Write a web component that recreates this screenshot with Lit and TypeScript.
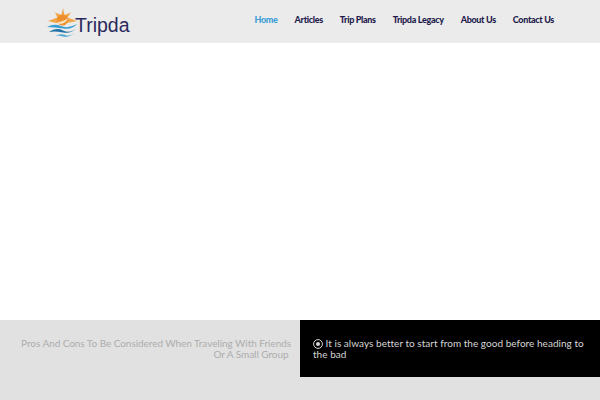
import { LitElement, html, css } from "lit";
import { customElement } from "lit/decorators.js";

const NAV = ["Home", "Articles", "Trip Plans", "Tripda Legacy", "About Us", "Contact Us"];

@customElement("app-root")
export class AppRoot extends LitElement {
  static styles = css`
    :host {
      display: flex;
      flex-direction: column;
      width: 600px;
      height: 400px;
      overflow: hidden;
      background: #fff;
      font-family: "Lato", "Noto Sans", sans-serif;
    }
    .header {
      height: 43px;
      flex: none;
      background: #ebebeb;
      display: flex;
      align-items: flex-start;
      justify-content: space-between;
      padding: 0 46px 0 47px;
    }
    .logo {
      display: flex;
      align-items: flex-start;
      padding-top: 8px;
    }
    .logo svg {
      display: block;
    }
    .brand {
      font-family: "Liberation Sans", sans-serif;
      font-size: 19.5px;
      color: #2b2a5e;
      margin-left: -3px;
      line-height: 22px;
      padding-top: 6px;
    }
    nav {
      display: flex;
      gap: 17px;
      padding-top: 13px;
    }
    nav a {
      font-size: 9px;
      font-weight: 900;
      letter-spacing: -0.33px;
      line-height: 13px;
      color: #1f1c4d;
    }
    nav a.active {
      color: #3d9fd6;
    }
    .spacer {
      height: 277px;
      flex: none;
    }
    .bottom {
      flex: 1;
      background: #e1e1e1;
      display: grid;
      grid-template-columns: 300px 300px;
      align-items: start;
    }
    .left {
      padding: 18px 9px 0 15px;
      text-align: right;
      color: #adadad;
      font-size: 10px;
      line-height: 11px;
      letter-spacing: -0.05px;
    }
    .right {
      height: 57px;
      background: #000;
      padding: 18px 13px 0;
      box-sizing: border-box;
      color: #d6d6d6;
      font-size: 10px;
      line-height: 11px;
      letter-spacing: 0.03px;
    }
    .right svg {
      vertical-align: -2px;
    }
  `;

  render() {
    return html`
      <header class="header">
        <div class="logo">
          <svg width="31" height="29" viewBox="0 0 31 29">
            <path d="M16 0 L17.4 7 L24 4.5 L20.5 9.5 L30 13 L20 15 L9 15 L1 13 L10.5 9.5 L8 4.5 L14.4 7 Z" fill="#f2a548" />
            <circle cx="15.5" cy="12" r="5.5" fill="#ee8f2c" />
            <path d="M10 14 Q16 14 21 10 Q19 16 12 16 Z" fill="#f9e2bd" />
            <path d="M0 19 Q7 15 14 18 T30 16 Q25 22 16 20.5 T0 19 Z" fill="#3a9ed2" />
            <path d="M2 24 Q9 19 16 22.5 T30 20 Q24 26 16 24.5 T2 24 Z" fill="#1f6fa6" />
            <path d="M8 28 Q13 25 18 27 T27 25 Q22 30 16 28.5 T8 28 Z" fill="#48a7d6" />
          </svg>
          <span class="brand">Tripda</span>
        </div>
        <nav>
          ${NAV.map((n, i) => html`<a class=${i === 0 ? "active" : ""}>${n}</a>`)}
        </nav>
      </header>
      <div class="spacer"></div>
      <section class="bottom">
        <div class="left">Pros And Cons To Be Considered When Traveling With Friends Or A Small Group&nbsp;</div>
        <div class="right">
          <svg width="10" height="10" viewBox="0 0 10 10">
            <circle cx="5" cy="5" r="4.4" fill="none" stroke="#d6d6d6" stroke-width="1" />
            <circle cx="5" cy="5" r="2" fill="#d6d6d6" />
          </svg>
          It is always better to start from the good before heading to the bad
        </div>
      </section>
    `;
  }
}
